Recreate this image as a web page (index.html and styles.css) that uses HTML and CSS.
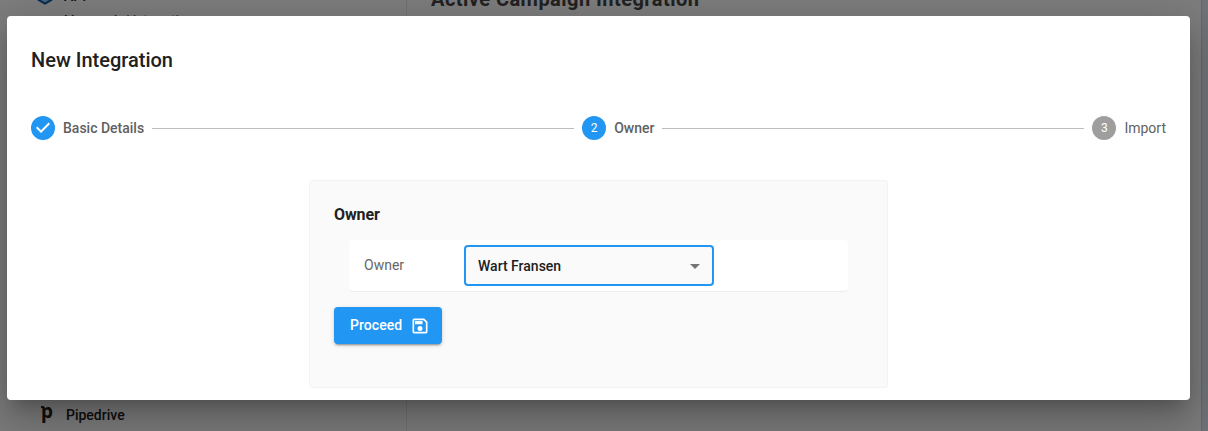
FILE: index.html
```html
<!DOCTYPE html>
<html lang="en">
<head>
<meta charset="utf-8">
<title>New Integration</title>
<link rel="stylesheet" href="styles.css">
</head>
<body>
<div class="page">
  <aside class="sidebar">
    <div class="nav-item nav-api">
      <svg class="nav-icon" viewBox="0 0 16 18" width="16" height="18"><path d="M8 1 14.5 4.7v8.2L8 16.5 1.500 12.900V4.700z" fill="#90caf9" stroke="#0d5ba5" stroke-width="2"/></svg>
      <span>API</span>
    </div>
    <div class="nav-sub">Manage Api Integration</div>
    <div class="nav-item nav-pipedrive"><span class="nav-logo">p</span><span>Pipedrive</span></div>
  </aside>
  <main class="content"><h1 class="content-title">Active Campaign Integration</h1></main>
  <div class="edge"></div>
</div>
<div class="backdrop">
  <section class="dialog" role="dialog">
    <h2 class="dialog-title">New Integration</h2>
    <div class="stepper">
      <div class="step">
        <svg class="step-check" viewBox="0 0 24 24" width="24" height="24"><path fill="#2196f3" d="M12 0a12 12 0 1 0 0 24 12 12 0 1 0 0-24zm-2 17l-5-5 1.400-1.400 3.600 3.600 7.600-7.600L19 8l-9 9z"/></svg>
        <span class="step-label">Basic Details</span>
      </div>
      <div class="connector"></div>
      <div class="step"><span class="step-dot active">2</span><span class="step-label">Owner</span></div>
      <div class="connector"></div>
      <div class="step"><span class="step-dot">3</span><span class="step-label pending">Import</span></div>
    </div>
    <div class="card">
      <h3 class="card-title">Owner</h3>
      <div class="field">
        <span class="field-label">Owner</span>
        <div class="select"><span>Wart Fransen</span><svg viewBox="0 0 10 5" width="10" height="5"><path d="M0 0h10L5 5z" fill="#757575"/></svg></div>
      </div>
      <button class="proceed">Proceed
        <svg viewBox="0 0 24 24" width="20" height="20"><path fill="#fff" d="M17 3H5a2 2 0 0 0-2 2v14a2 2 0 0 0 2 2h14a2 2 0 0 0 2-2V7l-4-4zm2 16H5V5h11.170L19 7.830V19zm-7-7a3 3 0 1 0 0 6 3 3 0 0 0 0-6zM6 6h9v4H6z"/></svg>
      </button>
    </div>
  </section>
</div>
</body>
</html>
```
FILE: styles.css
```css
* { box-sizing: border-box; }
body { margin: 0; height: 431px; overflow: hidden; font-family: Roboto, "Liberation Sans", sans-serif; font-size: 14px; color: #212121; }
h1, h2, h3 { margin: 0; font-weight: 500; }
.page { display: flex; height: 431px; background: #fafafa; }
.sidebar { width: 407px; padding-left: 37px; border-right: 1px solid #e4e4e4; display: flex; flex-direction: column; overflow: hidden; }
.nav-item { display: flex; align-items: center; font-weight: 500; }
.nav-api { height: 20px; margin-top: -14px; }
.nav-api span { margin-left: 11px; }
.nav-icon { flex: none; }
.nav-sub { margin: 7px 0 0 27px; font-size: 12px; line-height: 14px; color: #333; letter-spacing: 0.2px; }
.nav-pipedrive { height: 20px; margin-top: 378px; }
.nav-logo { position: relative; width: 29px; padding-left: 4px; font: bold 19px/20px "Noto Sans", sans-serif; margin-top: -8px; }
.nav-logo::before { content: ""; position: absolute; left: 4px; top: 5px; width: 3px; height: 2px; background: #212121; }
.content { flex: 1; padding-left: 24px; }
.content-title { margin-top: -13px; font-size: 20px; line-height: 24px; font-weight: 700; color: #444; letter-spacing: 0.46px; }
.edge { width: 7px; background: #dce8f2; border-left: 1px solid #bfd0e0; }
.backdrop { position: absolute; inset: 0; padding: 16px 18px 31px 7px; background: rgba(0, 0, 0, 0.5); }
.dialog { height: 384px; padding: 28px 24px 12px; border-radius: 4px; background: #fff; box-shadow: 0 11px 15px -7px rgba(0,0,0,.2), 0 24px 38px 3px rgba(0,0,0,.14), 0 9px 46px 8px rgba(0,0,0,.12); }
.dialog-title { font-size: 20px; line-height: 32px; }
.stepper { display: flex; align-items: center; margin-top: 40px; height: 24px; }
.step { display: flex; align-items: center; gap: 8px; }
.step-dot { width: 24px; height: 24px; border-radius: 50%; background: #9e9e9e; color: #fff; font-size: 12px; line-height: 25px; text-align: center; }
.step-dot.active { background: #2196f3; }
.step-label { color: #616161; font-weight: 500; line-height: 20px; }
.step-label.pending { font-weight: 400; }
.connector { flex: 1; height: 1px; margin: 1px 8px 0; background: #bdbdbd; }
.card { width: 579px; height: 208px; margin: 40px auto 0; padding: 23px 24px; border: 1px solid #f3f3f3; border-radius: 4px; background: #fafafa; }
.card-title { font-size: 16px; line-height: 22px; font-weight: 700; letter-spacing: -0.1px; }
.field { display: flex; align-items: center; width: 499px; height: 52px; margin: 14px 0 0 15px; padding-left: 15px; border-bottom: 1px solid #ececec; border-radius: 4px; background: #fff; }
.field-label { width: 100px; padding-bottom: 1px; color: #666; }
.select { display: flex; align-items: center; justify-content: space-between; width: 250px; height: 41px; padding: 0 12px; border: 2px solid #2196f3; border-radius: 4px; background: #fafafa; font-weight: 500; }
.select svg { margin-top: 2px; }
.proceed { display: flex; align-items: center; gap: 8px; width: 108px; height: 37px; margin-top: 15px; padding: 0 0 1px 16px; border: 0; border-radius: 4px; background: #2196f3; color: #fff; font: 500 14px Roboto, sans-serif; letter-spacing: 0.05px; box-shadow: 0 3px 1px -2px rgba(0,0,0,.2), 0 2px 2px rgba(0,0,0,.14), 0 1px 5px rgba(0,0,0,.12); }
.proceed svg { margin-top: 2px; }
```
